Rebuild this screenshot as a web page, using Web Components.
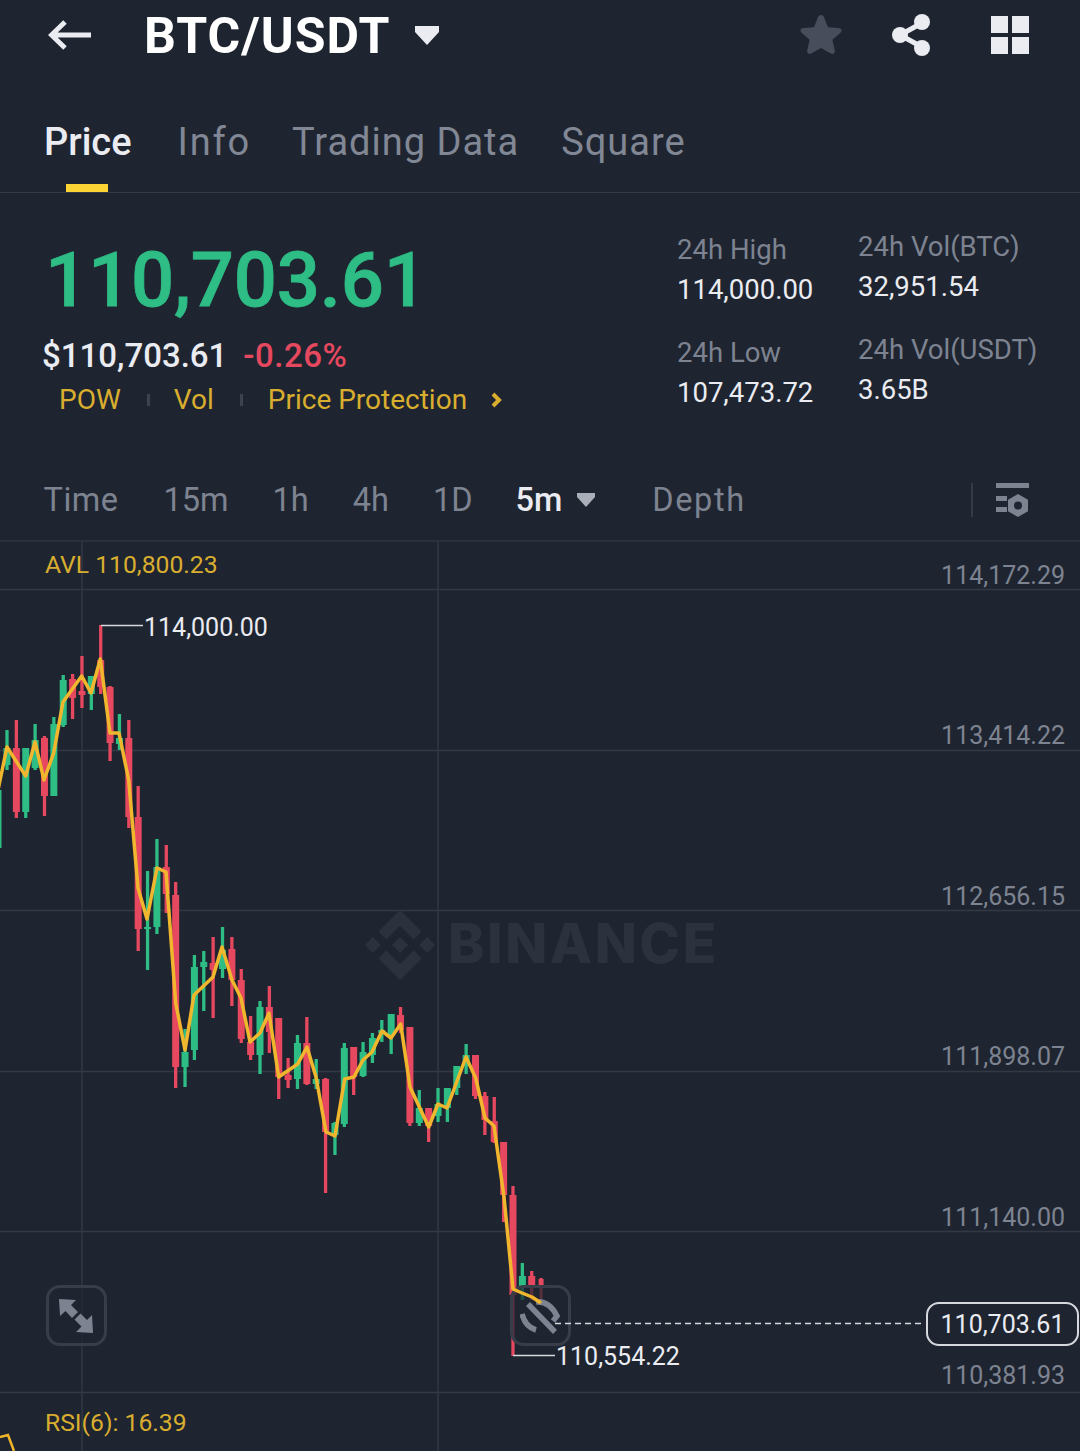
<!DOCTYPE html>
<html lang="en">
<head>
<meta charset="UTF-8">
<title>BTC/USDT</title>
<style>
  html, body { margin: 0; padding: 0; background: #1f2530; }
  body { width: 1080px; height: 1451px; overflow: hidden; font-family: Roboto, "Noto Sans", sans-serif; color: #eaecef; }
</style>
</head>
<body>
<pair-header>BTC/USDT</pair-header>
<market-tabs>
  <tab-item active>Price</tab-item>
  <tab-item style="margin-left:5px;letter-spacing:1.800px">Info</tab-item>
  <tab-item>Trading Data</tab-item>
  <tab-item style="margin-left:1px">Square</tab-item>
</market-tabs>
<ticker-panel></ticker-panel>
<interval-bar></interval-bar>
<kline-chart></kline-chart>

<script>
  class PairHeader extends HTMLElement {
    connectedCallback() {
      this.attachShadow({ mode: 'open' }).innerHTML = `
        <style>
          :host { display: flex; align-items: center; height: 70px; padding-left: 48px; box-sizing: border-box; }
          svg { display: block; flex: none; }
          .title { margin-left: 53px; padding-top: 2px; font: 700 50px/68px Roboto, sans-serif; color: #fff; letter-spacing: 1px; }
          .caret { margin-left: 24px; }
          .star { margin-left: auto; }
          .share { margin-left: 49px; }
          .grid { margin-left: 60px; margin-right: 51px; }
        </style>
        <svg width="43" height="30" viewBox="0 0 43 30"><path d="M43 15H4M17 2 3.500 15 17 28" fill="none" stroke="#eaecf2" stroke-width="5"/></svg>
        <span class="title"><slot></slot></span>
        <svg class="caret" width="26" height="20" viewBox="0 0 26 20"><path d="M1 1h24v6L13 20 1 7z" fill="#eaecf2"/></svg>
        <svg class="star" width="42" height="42" viewBox="0 0 42 42"><path d="M21 1c1.400 0 2.400 .8 3 2.200l4 10 10.700 .9c2.700 .2 3.700 3 1.700 4.700l-8 7 2.400 10.800c.6 2.600-2 4.300-4 3L21 34l-9.800 5.600c-2 1.300-4.600-.4-4-3L9.600 25.800l-8-7C-.4 17.100 .6 14.300 3.300 14.100L14 13.200l4-10C18.600 1.800 19.600 1 21 1z" fill="#474d5a"/></svg>
        <svg class="share" width="40" height="42" viewBox="0 0 40 42"><path d="M31 9 9 21l22 12" fill="none" stroke="#eaecf2" stroke-width="5"/><circle cx="31" cy="8" r="8" fill="#eaecf2"/><circle cx="9" cy="21" r="8" fill="#eaecf2"/><circle cx="31" cy="34" r="8" fill="#eaecf2"/></svg>
        <svg class="grid" width="38" height="38" viewBox="0 0 38 38" fill="#eaecf2"><rect width="17" height="17"/><rect x="21" width="17" height="17"/><rect y="21" width="17" height="17"/><rect x="21" y="21" width="17" height="17"/></svg>`
    }
  }
  customElements.define('pair-header', PairHeader)

  class MarketTabs extends HTMLElement {
    connectedCallback() {
      this.attachShadow({ mode: 'open' }).innerHTML = `
        <style>
          :host { display: flex; gap: 41px; height: 123px; padding-left: 44px; box-sizing: border-box; border-bottom: 1px solid #343a46; }
        </style>
        <slot></slot>`
    }
  }
  customElements.define('market-tabs', MarketTabs)

  class TabItem extends HTMLElement {
    connectedCallback() {
      this.attachShadow({ mode: 'open' }).innerHTML = `
        <style>
          :host { display: block; position: relative; font: 400 38px/44px Roboto, sans-serif; padding-top: 50px; color: #818794; height: 122px; box-sizing: border-box; letter-spacing: 1px; }
          :host([active]) { color: #eaecf2; font-weight: 500; letter-spacing: 0; }
          :host([active])::after { content: ""; position: absolute; left: 22px; bottom: 0; width: 42px; height: 8px; background: #fcd535; }
        </style>
        <slot></slot>`
    }
  }
  customElements.define('tab-item', TabItem)

  class StatCell extends HTMLElement {
    connectedCallback() {
      const label = this.getAttribute('label')
      const value = this.getAttribute('value')
      this.attachShadow({ mode: 'open' }).innerHTML = `
        <style>
          :host { display: block; }
          div { white-space: nowrap; }
          .l { font: 400 27.500px/38px Roboto, sans-serif; color: #7d8390; }
          .v { font: 400 27.500px/41px Roboto, sans-serif; color: #eaecf2; }
        </style>
        <div class="l">${label}</div>
        <div class="v">${value}</div>`
    }
  }
  customElements.define('stat-cell', StatCell)

  class TickerPanel extends HTMLElement {
    connectedCallback() {
      this.attachShadow({ mode: 'open' }).innerHTML = `
        <style>
          :host { display: flex; height: 268px; box-sizing: border-box; position: relative; }
          .left { width: 677px; flex: none; padding: 42px 0 0 42px; box-sizing: border-box; }
          .price { font: 500 76px/90px Roboto, sans-serif; color: #2ebd85; margin-left: 3px; letter-spacing: -.2px; -webkit-text-stroke: .8px #2ebd85; }
          .sub { display: flex; gap: 16px; margin-top: 9px; font: 500 33px/44px Roboto, sans-serif; color: #eaecf2; }
          .sub b { font-weight: 500; color: #e5485f; letter-spacing: .5px; }
          .tags { display: flex; align-items: center; margin: 0 0 0 17px; font: 400 28px/44px Roboto, sans-serif; color: #d9ae2f; }
          .sep { width: 3px; height: 12px; background: #3c424e; margin: 0 24px 0 26px; }
          .sep.b { margin-right: 25px; }
          svg { margin-left: 24px; }
          .stats { display: grid; grid-template-columns: 181px 200px; grid-auto-rows: 103px; padding-top: 38px; }
          .stats stat-cell:nth-child(even) { margin-top: -3px; }
        </style>
        <div class="left">
          <div class="price">110,703.61</div>
          <div class="sub"><span>$110,703.61</span><b>-0.26%</b></div>
          <div class="tags">
            <span>POW</span><i class="sep"></i><span>Vol</span><i class="sep b"></i><span>Price Protection</span>
            <svg width="11" height="16" viewBox="0 0 11 16"><path d="M2 2l6 6-6 6" fill="none" stroke="#d9ae2f" stroke-width="4"/></svg>
          </div>
        </div>
        <div class="stats">
          <stat-cell label="24h High" value="114,000.00"></stat-cell>
          <stat-cell label="24h Vol(BTC)" value="32,951.54"></stat-cell>
          <stat-cell label="24h Low" value="107,473.72"></stat-cell>
          <stat-cell label="24h Vol(USDT)" value="3.65B"></stat-cell>
        </div>`
    }
  }
  customElements.define('ticker-panel', TickerPanel)

  class IntervalBar extends HTMLElement {
    connectedCallback() {
      this.attachShadow({ mode: 'open' }).innerHTML = `
        <style>
          :host { display: flex; align-items: center; height: 81px; padding: 0 51px 1px 43.500px; box-sizing: border-box; border-bottom: 2px solid #2b313c; font: 400 32.500px/40px Roboto, sans-serif; color: #7d8390; }
          .i { margin-right: 44px; }
          .time { letter-spacing: .5px; margin-right: 45px; }
          .on { color: #eaecf2; font-weight: 500; margin-right: 15px; }
          .caret { margin-right: 57px; }
          .depth { letter-spacing: 1.600px; }
          .end { margin-left: auto; display: flex; align-items: center; gap: 23px; }
          .bar { width: 2px; height: 34px; background: #343a46; }
          svg { display: block; }
        </style>
        <span class="i time">Time</span><span class="i">15m</span><span class="i">1h</span><span class="i">4h</span><span class="i" style="margin-right:43px">1D</span>
        <span class="on">5m</span>
        <svg class="caret" width="18" height="14" viewBox="0 0 18 14"><path d="M0 0h18v4l-9 10-9-10z" fill="#a9aeb8"/></svg>
        <span class="depth">Depth</span>
        <span class="end">
          <i class="bar"></i>
          <svg width="33" height="34" viewBox="0 0 33 34" fill="#7d8390">
            <rect width="33" height="5"/><rect y="13" width="11" height="5"/><rect y="24" width="11" height="5"/>
            <path fill-rule="evenodd" d="M22 11l10 5.700v11.600L22 34l-10-5.700V16.700zM22 18.500a4 4 0 1 0 0 8 4 4 0 0 0 0-8z"/>
          </svg>
        </span>`
    }
  }
  customElements.define('interval-bar', IntervalBar)

  // [up?, wick top, wick bottom, body top, body bottom], one candle every 9.37px
  const candles = [
    [1,770,848,790,848],[1,730,770,748,765],[0,720,818,748,812],[1,748,818,748,812],[1,724,770,740,768],
    [0,736,816,738,796],[1,717,796,724,796],[1,675,727,680,725],[0,674,719,679,698],[0,656,708,691,695],
    [1,676,710,676,694],[0,625,694,660,687],[0,686,761,687,743],[1,714,750,738,744],[0,720,828,738,817],
    [0,786,951,817,929],[1,871,970,927,929],[1,839,934,867,927],[0,845,913,867,894],[0,882,1088,895,1067],
    [1,1029,1087,1052,1067],[1,955,1060,967,1050],[1,951,1011,962,967],[0,937,1018,963,970],[1,927,978,950,969],
    [0,937,1006,949,980],[0,969,1043,980,1039],[0,1016,1060,1042,1055],[1,1001,1074,1007,1055],[0,986,1053,1007,1032],
    [0,1018,1099,1018,1077],[0,1058,1088,1075,1080],[1,1035,1089,1043,1079],[0,1017,1085,1043,1084],[1,1059,1089,1079,1084],
    [0,1078,1193,1079,1132],[1,1122,1155,1123,1135],[1,1043,1127,1048,1124],[0,1047,1095,1047,1077],[1,1042,1077,1052,1076],
    [1,1033,1063,1038,1055],[1,1020,1042,1030,1033],[1,1014,1054,1014,1035],[0,1007,1033,1015,1030],[0,1027,1126,1027,1123],
    [1,1090,1126,1108,1123],[0,1108,1142,1108,1126],[1,1088,1122,1104,1116],[1,1088,1122,1088,1108],[1,1066,1095,1066,1088],
    [1,1044,1074,1055,1066],[0,1055,1099,1055,1096],[0,1092,1135,1096,1120],[0,1097,1143,1121,1142],[0,1142,1222,1142,1195],
    [0,1186,1356,1195,1295],[1,1263,1300,1276,1286],[0,1271,1300,1276,1286],[0,1278,1302,1279,1285]
  ]
  const maLine = '-2,790 7,747 25.700,776 35,742 44,780 53.700,753 63,702 81.700,676 91,693 100.300,659 110,733 119,733 128.700,780 138,888 147,919 157,868 166,872 175.700,1003 185,1050 194,995 213,977 222,947 232,980 241,998 250,1042 260,1033 269,1013 278.700,1077 297.700,1064 307,1047 316,1077 326,1132 335,1136 344.700,1079 354,1077 363,1060 372,1052 382,1031 391,1038 400.700,1024 410,1087 428.700,1127 438,1104 447,1108 466,1057 475.700,1078 485,1118 494,1126 504,1197 513,1289 522,1293 532,1297 541,1303'

  class KlineChart extends HTMLElement {
    connectedCallback() {
      const grid = [589, 750, 910, 1071, 1231, 1392]
        .map(y => `<line x1="0" x2="1080" y1="${y}.5" y2="${y}.5"/>`).join('')
      const bars = candles.map((c, i) => {
        const x = i === 0 ? -2 : 7 + (i - 1) * 9.37
        const col = c[0] ? '#2ebd85' : '#e5485f'
        const w = i === 58 ? 3 : 3.300
        const bw = i === 58 ? 5 : 7
        return `<rect x="${x - w / 2}" y="${c[1]}" width="${w}" height="${c[2] - c[1]}" fill="${col}"/>` +
          `<rect x="${x - bw / 2}" y="${c[3]}" width="${bw}" height="${Math.max(c[4] - c[3], 2)}" fill="${col}"/>`
      }).join('')
      const axis = [['114,172.29', 576], ['113,414.22', 736], ['112,656.15', 897], ['111,898.07', 1057], ['111,140.00', 1218], ['110,381.93', 1376]]
        .map(([t, y]) => `<span class="axis" style="top:${y - 557}px">${t}</span>`).join('')
      this.attachShadow({ mode: 'open' }).innerHTML = `
        <style>
          :host { display: block; position: relative; height: 909px; overflow: hidden; }
          svg { position: absolute; left: 0; top: 0; display: block; }
          span { position: absolute; white-space: nowrap; font: 400 25px/30px Roboto, sans-serif; }
          .axis { right: 15px; color: #7d8390; }
          .ind { left: 45px; color: #d9ae2f; font-size: 24.700px; }
          .mark { color: #eaecf2; }
          .tag { left: 926px; top: 760px; width: 153px; height: 44px; box-sizing: border-box; border: 2px solid #d5d8dd; border-radius: 13px; background: #1f2530; color: #eaecf2; text-align: center; line-height: 42px; }
          .wm { left: 448px; top: 363px; font: 800 55px/76px Inter, sans-serif; color: #2b313d; letter-spacing: 2.500px; }
          .btn { position: absolute; top: 743px; width: 61px; height: 61px; box-sizing: border-box; border: 3px solid #373d49; border-radius: 14px; background: rgba(31, 37, 48, .72); }
          .btn svg { left: 7px; top: 7px; }
        </style>
        <svg width="1080" height="909" viewBox="0 542 1080 909">
          <g transform="translate(365 910) scale(.553)" fill="#2b313d">
            <path d="M38.730 53.200l24.590-24.580 24.600 24.600 14.300-14.310L63.320 0 24.430 38.900z"/>
            <path d="M0 63.310l14.300-14.310 14.310 14.310-14.310 14.300z"/>
            <path d="M38.730 73.410l24.590 24.590 24.600-24.600 14.310 14.290-38.900 38.910-38.910-38.880z"/>
            <path d="M98.010 63.310l14.300-14.310 14.300 14.300-14.300 14.320z"/>
            <path d="M77.830 63.300L63.320 48.780 48.810 63.280l14.510 14.500z"/>
          </g>
          <g stroke="#323844" stroke-width="1.500">${grid}
            <line x1="82" x2="82" y1="542" y2="1451"/><line x1="438" x2="438" y1="542" y2="1451"/>
          </g>
          ${bars}
          <path d="M101 625.500h42M513 1355.500h42" stroke="#d5d8dd" stroke-width="1.500" fill="none"/>
          <path d="M0 1437l8-2 6 16" fill="none" stroke="#f0b429" stroke-width="2.500"/>
        </svg>
        <span class="wm">BINANCE</span>
        <span class="ind" style="top:8px">AVL 110,800.23</span>
        <span class="ind" style="top:866px">RSI(6): 16.39</span>
        <span class="mark" style="left:144px;top:71px">114,000.00</span>
        <span class="mark" style="left:556px;top:800px">110,554.22</span>
        ${axis}
        <span class="axis" style="top:906px">70.0</span>
        <div class="btn" style="left:46px">
          <svg width="41" height="41" viewBox="0 0 41 41" fill="#7d8390">
            <path d="M3 4l17 1-5 5 7 7-6 6-6.500-7L4 21zM37 38l-17-1 5.500-5.500-7-7 6-6L31 25l5-5z"/>
          </svg>
        </div>
        <div class="btn" style="left:510px">
          <svg width="41" height="41" viewBox="0 0 41 41" fill="none" stroke="#7d8390" stroke-width="5.500">
            <path d="M8 9l27 28M16 7c9-1 16 4 21 14l-4 5M2 19c2 8 7 14 14 16"/>
          </svg>
        </div>
        <svg width="1080" height="909" viewBox="0 542 1080 909">
          <polyline points="${maLine}" fill="none" stroke="#f0b62e" stroke-width="3.500" stroke-linejoin="round"/>
          <line x1="555" x2="923" y1="1323.500" y2="1323.500" stroke="#d5d8dd" stroke-width="1.500" stroke-dasharray="6 4"/>
        </svg>
        <span class="tag">110,703.61</span>`
    }
  }
  customElements.define('kline-chart', KlineChart)
</script>
</body>
</html>
